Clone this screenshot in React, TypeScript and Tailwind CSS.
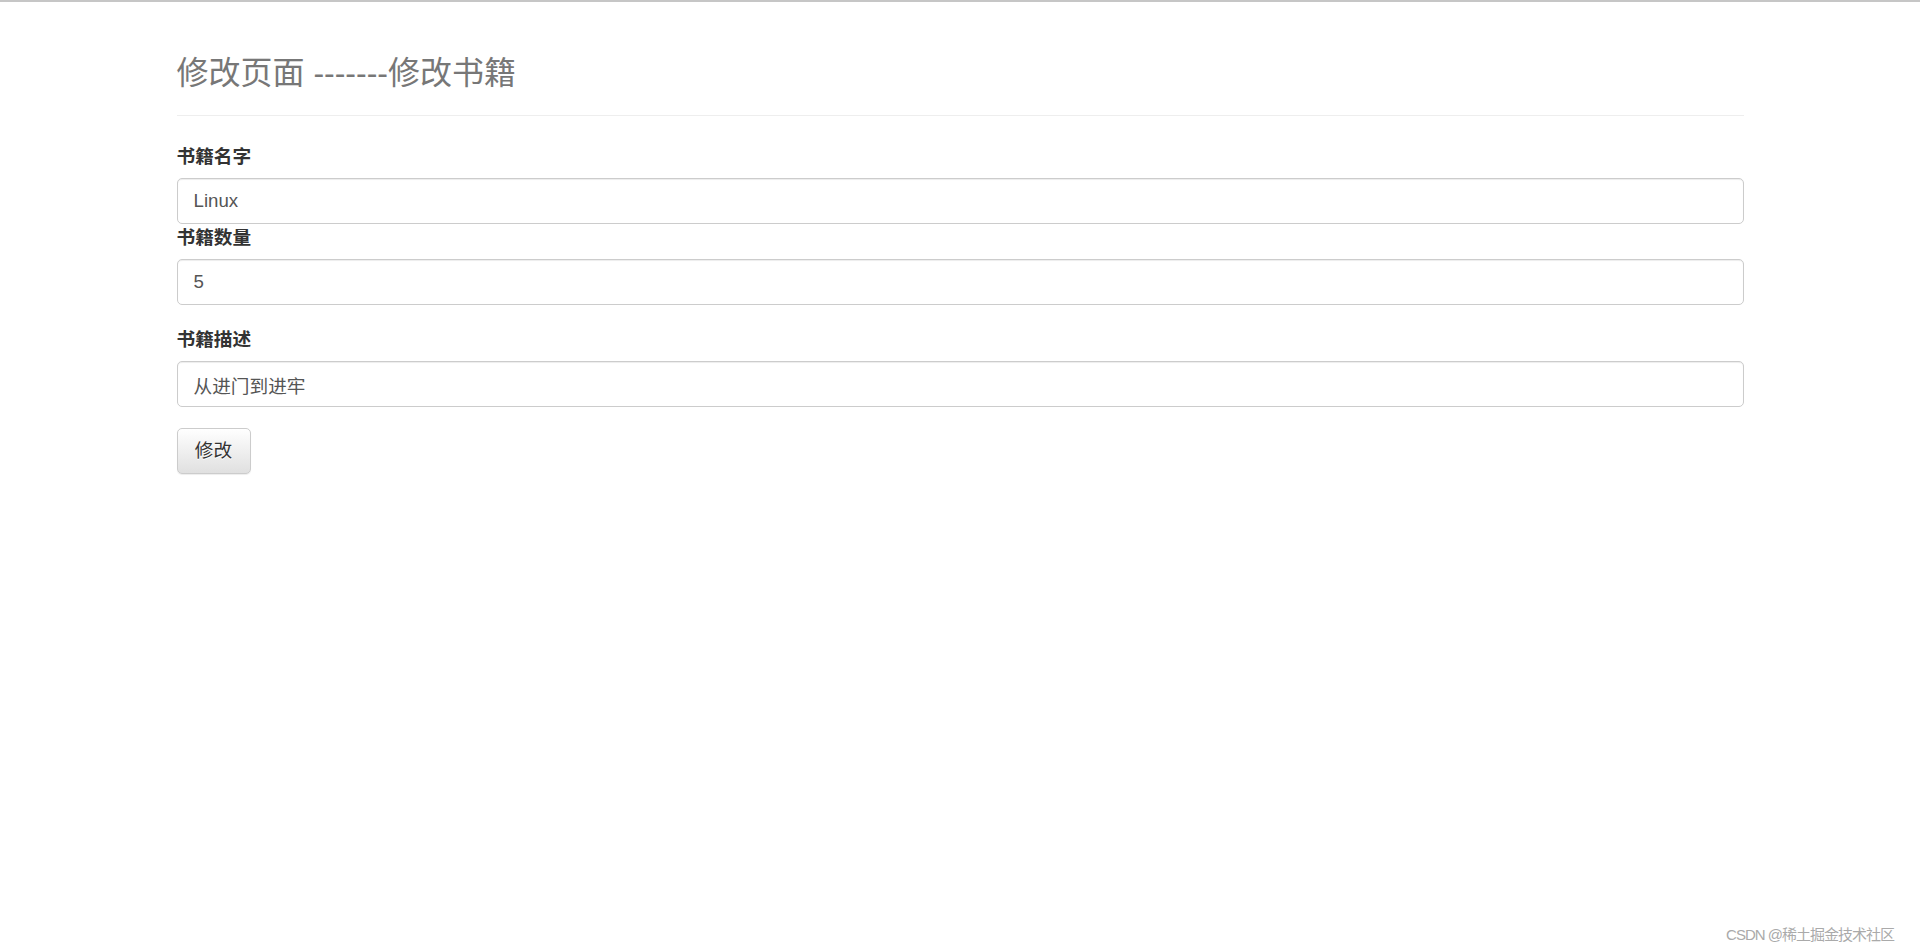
const fontStack = "font-['Liberation_Sans','Noto_Sans_CJK_SC',sans-serif]";

const Field = ({
  label,
  value,
  className,
}: {
  label: string;
  value: string;
  className?: string;
}) => (
  <div className={className}>
    <label className="block text-[18.67px] leading-[27px] font-bold text-[#333] mb-[8px]">
      {label}
    </label>
    <input
      type="text"
      readOnly
      value={value}
      className="block w-full h-[46px] px-[16px] text-[18.67px] text-[#555] bg-white border border-[#ccc] rounded-[5px] shadow-[inset_0_1px_1px_rgba(0,0,0,0.075)] outline-none"
    />
  </div>
);

export default function App() {
  return (
    <div className={`relative min-h-[952px] bg-white border-t-2 border-[#c6c6c6] ${fontStack}`}>
      <div className="mx-auto w-[1567px]">
        <div className="mt-[53px] pb-[24px] border-b border-[#eee]">
          <h3 className="m-0 text-[32px] leading-[36px] font-normal text-[#777]">
            修改页面 -------修改书籍
          </h3>
        </div>

        <form className="flex flex-col">
          <div className="mt-[27px]">
            <Field label="书籍名字" value="Linux" />
          </div>
          <Field label="书籍数量" value="5" className="mb-[21px]" />
          <Field label="书籍描述" value="从进门到进牢" className="mb-[21px]" />
          <div>
            <button
              type="button"
              className="h-[46px] w-[74px] text-[18.67px] text-[#333] border border-[#ccc] rounded-[5px] bg-gradient-to-b from-white to-[#e0e0e0] [text-shadow:0_1px_0_#fff] shadow-[inset_0_1px_0_rgba(255,255,255,0.15),0_1px_1px_rgba(0,0,0,0.075)]"
            >
              修改
            </button>
          </div>
        </form>
      </div>

      <div className="absolute right-[26px] bottom-[10px] text-[15px] leading-none text-[#aaa] tracking-[-1px]">
        CSDN @稀土掘金技术社区
      </div>
    </div>
  );
}
